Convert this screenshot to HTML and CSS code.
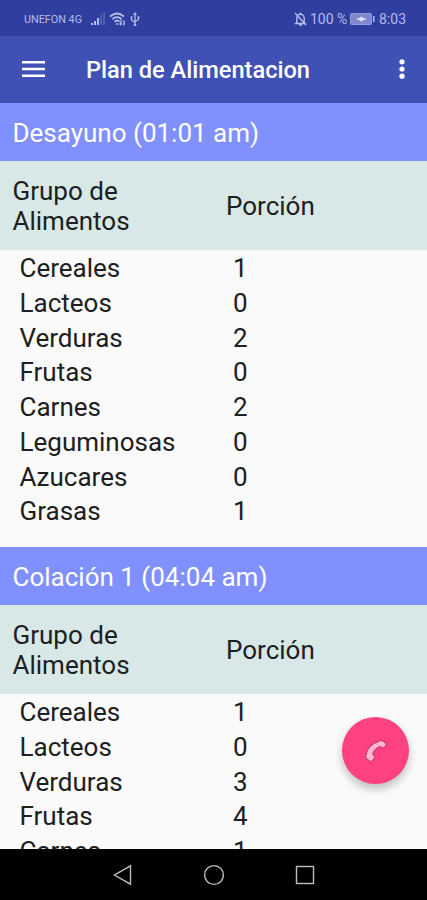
FILE: index.html
```html
<!DOCTYPE html>
<html lang="es">
<head>
  <meta charset="UTF-8" />
  <meta name="viewport" content="width=device-width, initial-scale=1" />
  <title>Plan de Alimentacion</title>
  <link rel="stylesheet" href="styles.css">
</head>
<body>
  <div class="status-bar">
    <span class="carrier">UNEFON 4G</span>
    <svg class="signal" width="15" height="14" viewBox="0 0 15 14" fill="#b4bbea">
      <rect x="0" y="11" width="2" height="2" />
      <rect x="3" y="9" width="2" height="4" />
      <rect x="6" y="6" width="2" height="7" />
      <rect x="9" y="3" width="2" height="10" opacity=".25" />
      <rect x="12" y="0" width="2" height="13" opacity=".25" />
    </svg>
    <svg class="wifi" width="17" height="14" viewBox="0 0 17 14" fill="none" stroke="#b4bbea" stroke-width="1.7">
      <path d="M1 4.5Q8 -1.5 15 4.5M3.3 7.2Q8 3 12.7 7.2M5.5 9.7Q8 7.6 10.5 9.7" />
      <path d="M6.8 12h2.4M12 8v5M10.5 11.5l1.5 1.5M15 13.5v-5" stroke-width="1.4" />
    </svg>
    <svg class="usb" width="10" height="15" viewBox="0 0 10 15" fill="none" stroke="#b4bbea" stroke-width="1.3">
      <path d="M5 2v11M1.5 5.5V8L5 10.5M8.5 5v2.500L5 9.500" />
      <path d="M5 0l2 3H3zM3.8 12h2.400v2H3.800zM.6 4.200h1.800V6H.6zM7.600 4.200h1.800V6H7.600z" fill="#b4bbea" stroke="none" />
    </svg>
    <svg class="muted" width="13" height="14" viewBox="0 0 13 14" fill="none" stroke="#b4bbea" stroke-width="1.4">
      <path d="M2.800 10.500V6a3.700 3.700 0 0 1 7.400 0v4.500l1 1H1.800zM5.500 1.500h2M5 13h3M1 1l11 12" />
    </svg>
    <span class="percent">100 %</span>
    <svg class="battery" width="25" height="12" viewBox="0 0 25 12">
      <rect x=".5" y=".5" width="21" height="11" rx="1" fill="#7e88cd" stroke="#959dd8" />
      <rect x="23" y="3" width="1.5" height="6" fill="#b4bbea" />
      <path d="M6 6l4.500-1.500L11 3l1.500 1.500L17 6l-4.500 1.500L11 9l-.5-1.500z" fill="#e1e4fa" />
    </svg>
    <span class="clock">8:03</span>
  </div>

  <header class="toolbar">
    <svg class="menu" width="24" height="18" viewBox="0 0 24 18" fill="#fff">
      <path d="M0 1h23v2.500H0zM0 7.700h23v2.500H0zM0 14.400h23v2.500H0z" />
    </svg>
    <h1>Plan de Alimentacion</h1>
    <svg class="more" width="6" height="20" viewBox="0 0 6 20" fill="#fff">
      <circle cx="3" cy="2.800" r="2.600" />
      <circle cx="3" cy="10" r="2.600" />
      <circle cx="3" cy="17.200" r="2.600" />
    </svg>
  </header>

  <main class="plan">
    <section class="meal">
      <h2>Desayuno (01:01 am)</h2>
      <div class="row head"><span>Grupo de Alimentos</span><span>Porción</span></div>
      <div class="row"><span>Cereales</span><span>1</span></div>
      <div class="row"><span>Lacteos</span><span>0</span></div>
      <div class="row"><span>Verduras</span><span>2</span></div>
      <div class="row"><span>Frutas</span><span>0</span></div>
      <div class="row"><span>Carnes</span><span>2</span></div>
      <div class="row"><span>Leguminosas</span><span>0</span></div>
      <div class="row"><span>Azucares</span><span>0</span></div>
      <div class="row"><span>Grasas</span><span>1</span></div>
    </section>
    <section class="meal">
      <h2>Colación 1 (04:04 am)</h2>
      <div class="row head"><span>Grupo de Alimentos</span><span>Porción</span></div>
      <div class="row"><span>Cereales</span><span>1</span></div>
      <div class="row"><span>Lacteos</span><span>0</span></div>
      <div class="row"><span>Verduras</span><span>3</span></div>
      <div class="row"><span>Frutas</span><span>4</span></div>
      <div class="row"><span>Carnes</span><span>1</span></div>
    </section>
    <button class="call" aria-label="Llamar">
      <svg width="24" height="24" viewBox="0 0 24 24" fill="#ffb5cf" stroke="#b8305f" stroke-width="1">
        <path d="M15.500 2Q17 1 18.300 1.800L22 4.300Q22.600 5.200 21.600 6.500L19.800 8.700Q18.800 9.300 17.800 8.600L15.600 7.400Q10.800 9.500 8.600 14.600L10.300 17.300Q11 18.300 10.300 19.200L7.800 22Q6.800 23 5.800 22L2.800 20Q1.700 19 1.800 16.500Q3.500 6 15.500 2Z" />
      </svg>
    </button>
  </main>

  <nav class="nav-bar">
    <svg width="20" height="22" viewBox="0 0 20 22"><path d="M17.500 1.800v18.400L1.500 11z" /></svg>
    <svg width="22" height="22" viewBox="0 0 22 22"><circle cx="11" cy="11" r="9.400" /></svg>
    <svg width="20" height="22" viewBox="0 0 20 22"><rect x="1.500" y="2.500" width="17" height="17" /></svg>
  </nav>
</body>
</html>
```
FILE: styles.css
```css
* {
  box-sizing: border-box;
}

body {
  display: flex;
  flex-direction: column;
  height: 900px;
  margin: 0;
  overflow: hidden;
  background: #fafafa;
  color: #1d2020;
  font-family: Roboto, sans-serif;
}

svg {
  display: block;
  flex: none;
}

/* Status bar */
.status-bar {
  display: flex;
  align-items: center;
  flex: none;
  height: 36px;
  padding: 2px 21px 0 24px;
  background: #303f9f;
  color: #b4bbea;
  white-space: nowrap;
}

.carrier {
  width: 58px;
  font-size: 10.8px;
}

.signal {
  margin-left: 9px;
}

.wifi {
  margin-left: 3px;
}

.usb {
  margin-left: 4px;
}

.muted {
  margin-left: auto;
}

.percent {
  width: 38px;
  margin-left: 3px;
  font-size: 14px;
}

.battery {
  margin-left: 2px;
}

.clock {
  width: 27px;
  margin-left: 4px;
  font-size: 14px;
}

/* Toolbar */
.toolbar {
  display: flex;
  align-items: center;
  flex: none;
  height: 66.5px;
  padding: 0 22px;
  background: #3f51b5;
  color: #fff;
}

.toolbar h1 {
  flex: 1;
  margin: 2px 0 0 40px;
  font-size: 23.6px;
  font-weight: 500;
  white-space: nowrap;
}

/* Meals */
.plan {
  position: relative;
  flex: 1;
  min-height: 0;
  overflow: hidden;
}

.meal {
  height: 444px;
}

.meal h2 {
  height: 58px;
  margin: 0;
  padding-left: 12.5px;
  background: #8090ff;
  color: #fff;
  font-size: 26px;
  font-weight: 400;
  line-height: 60px;
}

.row {
  display: grid;
  grid-template-columns: 213.5px 1fr;
  align-items: center;
  height: 34.75px;
  padding: 3px 19.5px 0;
  font-size: 26px;
  line-height: 30.5px;
}

.row.head {
  height: 89px;
  padding: 2px 12.5px 0;
  background: #d7e8e6;
}

.row.head span:first-child {
  width: 150px;
}

.call {
  position: absolute;
  right: 18px;
  bottom: 65px;
  display: flex;
  align-items: center;
  justify-content: center;
  width: 67px;
  height: 67px;
  padding: 0;
  border: none;
  border-radius: 50%;
  background: #ff4081;
  box-shadow: 0 5px 9px rgba(0, 0, 0, .24);
}

/* System navigation */
.nav-bar {
  display: flex;
  align-items: center;
  justify-content: space-between;
  flex: none;
  height: 51px;
  padding: 0 112px 0 113px;
  background: #000;
}

.nav-bar svg {
  fill: none;
  stroke: #bdbdbd;
  stroke-width: 1.4;
}
```
